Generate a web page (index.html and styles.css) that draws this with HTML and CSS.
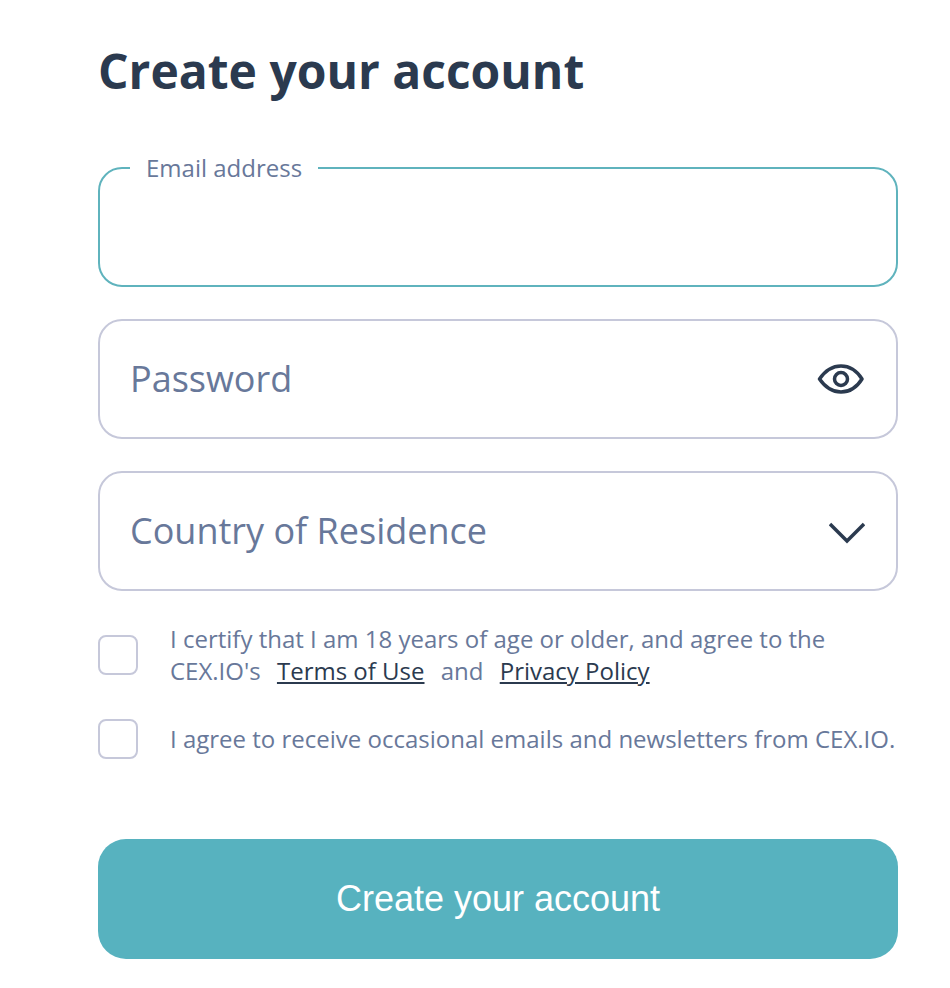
FILE: index.html
```html
<!DOCTYPE html>
<html lang="en">
<head>
<meta charset="utf-8">
<title>Create your account</title>
<link rel="stylesheet" href="styles.css">
</head>
<body>
<main class="page">
  <h1 class="title">Create your account</h1>
  <form class="form">
    <div class="field field-active">
      <span class="field-label">Email address</span>
    </div>
    <div class="field">
      <span class="placeholder">Password</span>
      <svg class="eye" width="48" height="32" viewBox="0 0 48 32" fill="none" stroke="#2b3a4f" stroke-width="3.5">
        <path d="M3.500 16 C9 8 16 3 25 3 C34 3 41 8 46 16 C41 24 34 29 25 29 C16 29 9 24 3.500 16 Z" stroke-linejoin="round"/>
        <circle cx="25" cy="16" r="6.500"/>
      </svg>
    </div>
    <div class="field">
      <span class="placeholder">Country of Residence</span>
      <svg class="chevron" width="36" height="22" viewBox="0 0 36 22" fill="none" stroke="#2b3a4f" stroke-width="3.5">
        <path d="M1 2 L18 19 L35 2"/>
      </svg>
    </div>
    <div class="check-row check-row-first">
      <span class="checkbox"></span>
      <p class="check-text">I certify that I am 18 years of age or older, and agree to the<br>CEX.IO's <a class="link" href="#">Terms of Use</a> and <a class="link" href="#">Privacy Policy</a></p>
    </div>
    <div class="check-row check-row-second">
      <span class="checkbox"></span>
      <p class="check-text">I agree to receive occasional emails and newsletters from CEX.IO.</p>
    </div>
    <button class="submit" type="button">Create your account</button>
  </form>
</main>
</body>
</html>
```
FILE: styles.css
```css
* { box-sizing: border-box; }
html, body { margin: 0; padding: 0; background: #fff; }
body { font-family: "Open Sans", sans-serif; color: #68789a; }
.page { width: 950px; height: 988px; padding: 0 52px 0 98px; overflow: hidden; }
.title {
  margin: 0;
  padding-top: 38px;
  height: 167px;
  font-size: 48px;
  line-height: 66px;
  font-weight: 700;
  color: #2b3a4f;
}
.form { display: flex; flex-direction: column; }
.field {
  position: relative;
  display: flex;
  align-items: center;
  justify-content: space-between;
  height: 120px;
  margin-bottom: 32px;
  padding: 0 32px 0 30px;
  border: 2px solid #c6c8da;
  border-radius: 24px;
}
.field-active { border-color: #5fb3bd; }
.field-label {
  position: absolute;
  left: 30px;
  top: -16px;
  padding: 0 16px;
  background: #fff;
  font-size: 24px;
  line-height: 30px;
  color: #68789a;
}
.placeholder { font-size: 36px; line-height: 48px; color: #68789a; }
.eye { display: block; }
.chevron { display: block; margin: 4px -1px 0 0; }
.check-row { display: flex; align-items: center; gap: 32px; }
.check-row-first { margin-top: 0; }
.check-row-second { margin-top: 32px; }
.checkbox {
  flex: none;
  width: 40px;
  height: 40px;
  border: 2px solid #c6c8da;
  border-radius: 8px;
}
.check-text { margin: 0; font-size: 24px; line-height: 32px; color: #68789a; white-space: nowrap; }
.link { margin: 0 10px; color: #2b3a4f; text-decoration: underline; }
.submit {
  margin-top: 80px;
  height: 120px;
  width: 800px;
  border: 0;
  border-radius: 28px;
  background: #57b2bf;
  color: #fff;
  font-family: "Liberation Sans", Arial, sans-serif;
  font-size: 36px;
}
```
